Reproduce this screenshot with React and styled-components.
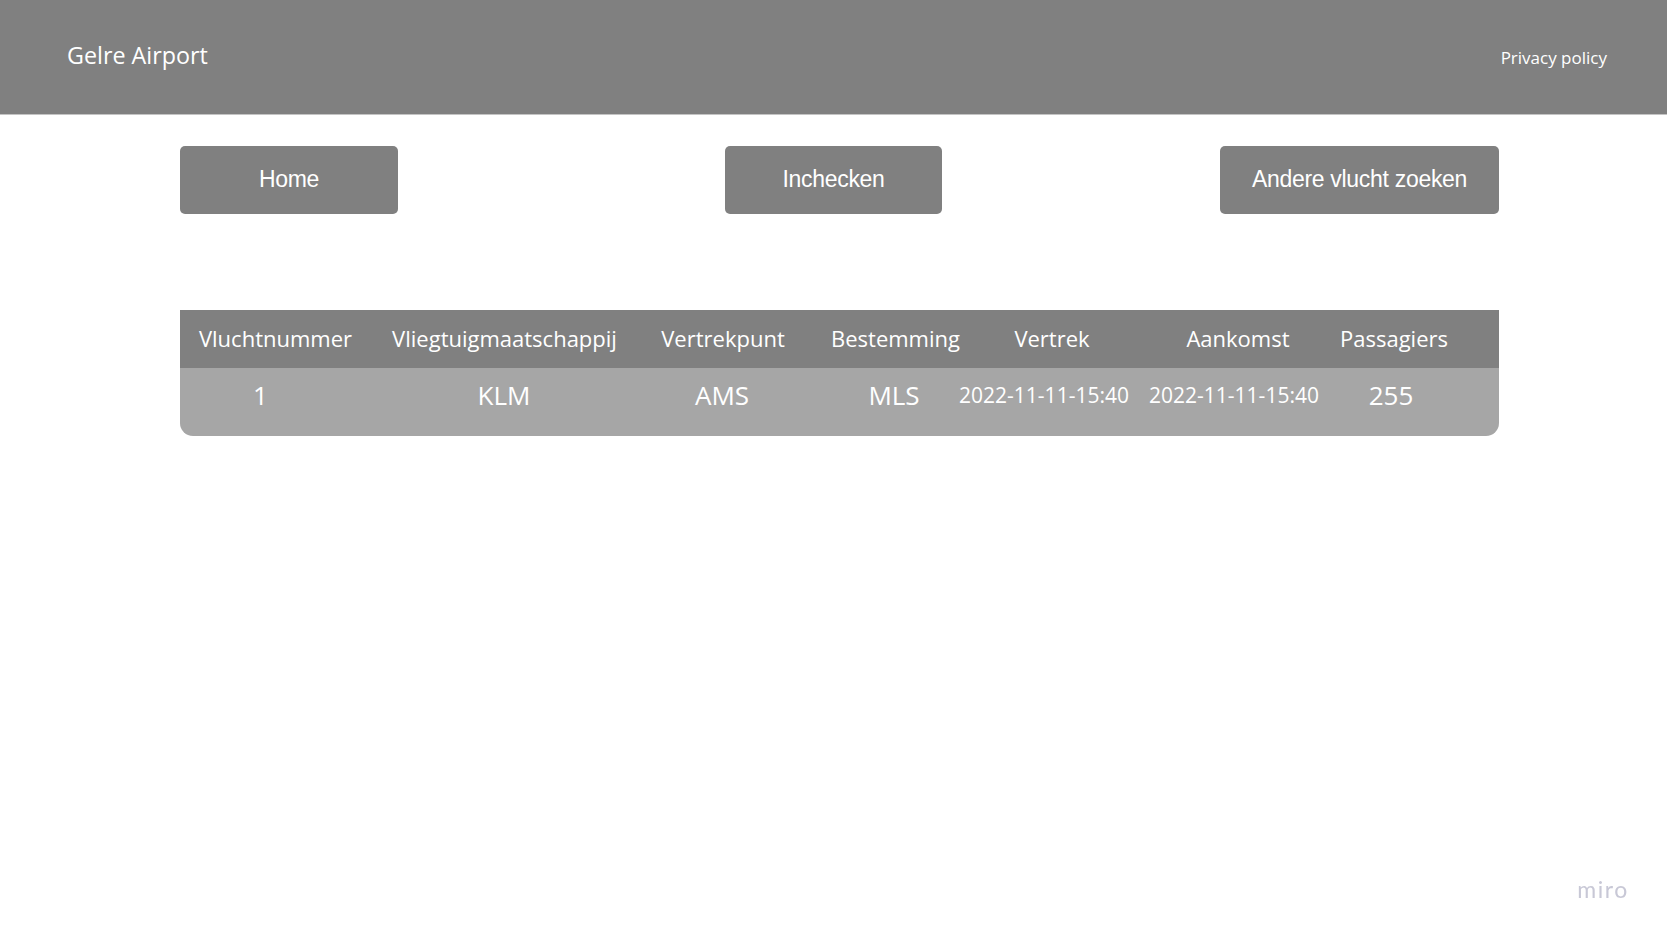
import React from 'react'
import styled, { createGlobalStyle } from 'styled-components'

const GlobalStyle = createGlobalStyle`
    html, body {
        margin: 0;
        padding: 0;
        background: #ffffff;
        font-family: "Open Sans", "Noto Sans", sans-serif;
    }
`

// kolommen van de vluchttabel (kop en rij staan net iets anders uitgelijnd)
const columns = [
    { label: 'Vluchtnummer', head: 191, body: 161 },
    { label: 'Vliegtuigmaatschappij', head: 267, body: 326 },
    { label: 'Vertrekpunt', head: 170, body: 110 },
    { label: 'Bestemming', head: 175, body: 234 },
    { label: 'Vertrek', head: 138, body: 66 },
    { label: 'Aankomst', head: 234, body: 314 },
    { label: 'Passagiers', head: 78, body: 0 },
]

const flight = {
    nummer: '1',
    maatschappij: 'KLM',
    vertrekpunt: 'AMS',
    bestemming: 'MLS',
    vertrek: '2022-11-11-15:40',
    aankomst: '2022-11-11-15:40',
    passagiers: '255',
}

const headCols = columns.map(c => `${c.head}px`).join(' ') + ' 1fr'
const bodyCols = columns.map(c => `${c.body}px`).join(' ') + ' 1fr'

const App = () => {
    const values = [
        { text: flight.nummer },
        { text: flight.maatschappij },
        { text: flight.vertrekpunt },
        { text: flight.bestemming },
        { text: flight.vertrek, small: true },
        { text: flight.aankomst, small: true },
        { text: flight.passagiers },
    ]

    return (
        <>
            <GlobalStyle />
            <Header>
                <Brand>Gelre Airport</Brand>
                <PrivacyLink href="#">Privacy policy</PrivacyLink>
            </Header>

            <Main>
                <Nav>
                    <NavButton $w={218}>Home</NavButton>
                    <NavButton $w={217} $ml={327}>Inchecken</NavButton>
                    <NavButton $w={279} $ml={278}>Andere vlucht zoeken</NavButton>
                </Nav>

                <Table>
                    <HeadRow $cols={headCols}>
                        {columns.map(c => (
                            <Cell key={c.label}>{c.label}</Cell>
                        ))}
                    </HeadRow>
                    <BodyRow $cols={bodyCols}>
                        {values.map((v, i) => (
                            <Cell key={i} $small={v.small} $body>{v.text}</Cell>
                        ))}
                    </BodyRow>
                </Table>
            </Main>

            <Watermark>miro</Watermark>
        </>
    )
}

const Header = styled.header`
    height: 114px;
    background-color: #808080;
    border-bottom: 1px solid #c4c4c4;
    display: flex;
    align-items: center;
    justify-content: space-between;
    padding: 0 60px 0 67px;
    color: #ffffff;
`

const Brand = styled.div`
    font-size: 23.3px;
    line-height: 1;
    margin-top: -2px;
`

const PrivacyLink = styled.a`
    font-size: 17px;
    color: #ffffff;
    text-decoration: none;
`

const Main = styled.main`
    padding: 31px 168px 0 180px;
`

const Nav = styled.nav`
    display: flex;
    align-items: center;
`

const NavButton = styled.button`
    width: ${p => p.$w}px;
    height: 68px;
    margin-left: ${p => p.$ml || 0}px;
    background-color: #808080;
    border: none;
    border-radius: 5px;
    color: #ffffff;
    font-family: "Liberation Sans", Arial, sans-serif;
    font-size: 23px;
    letter-spacing: -0.3px;
    padding: 0 0 2px;
    cursor: pointer;
`

const Table = styled.div`
    margin-top: 96px;
    border-radius: 0 0 13px 13px;
    overflow: hidden;
`

const HeadRow = styled.div`
    display: grid;
    grid-template-columns: ${p => p.$cols};
    height: 58px;
    padding-bottom: 2px;
    box-sizing: border-box;
    align-items: center;
    background-color: #808080;
    color: #ffffff;
`

const BodyRow = styled.div`
    display: grid;
    grid-template-columns: ${p => p.$cols};
    height: 68px;
    align-items: start;
    padding-top: 9px;
    box-sizing: border-box;
    background-color: #a6a6a6;
    color: #ffffff;
`

const Cell = styled.div`
    display: flex;
    justify-content: center;
    align-items: center;
    height: ${p => (p.$body ? '36px' : 'auto')};
    white-space: nowrap;
    font-size: ${p => (!p.$body ? '22px' : p.$small ? '21px' : '26px')};
`

const Watermark = styled.div`
    position: fixed;
    right: 38px;
    bottom: 34px;
    font-family: "Lato", "Open Sans", sans-serif;
    font-size: 23px;
    letter-spacing: 1.6px;
    color: #c8c8d6;
`

export default App
